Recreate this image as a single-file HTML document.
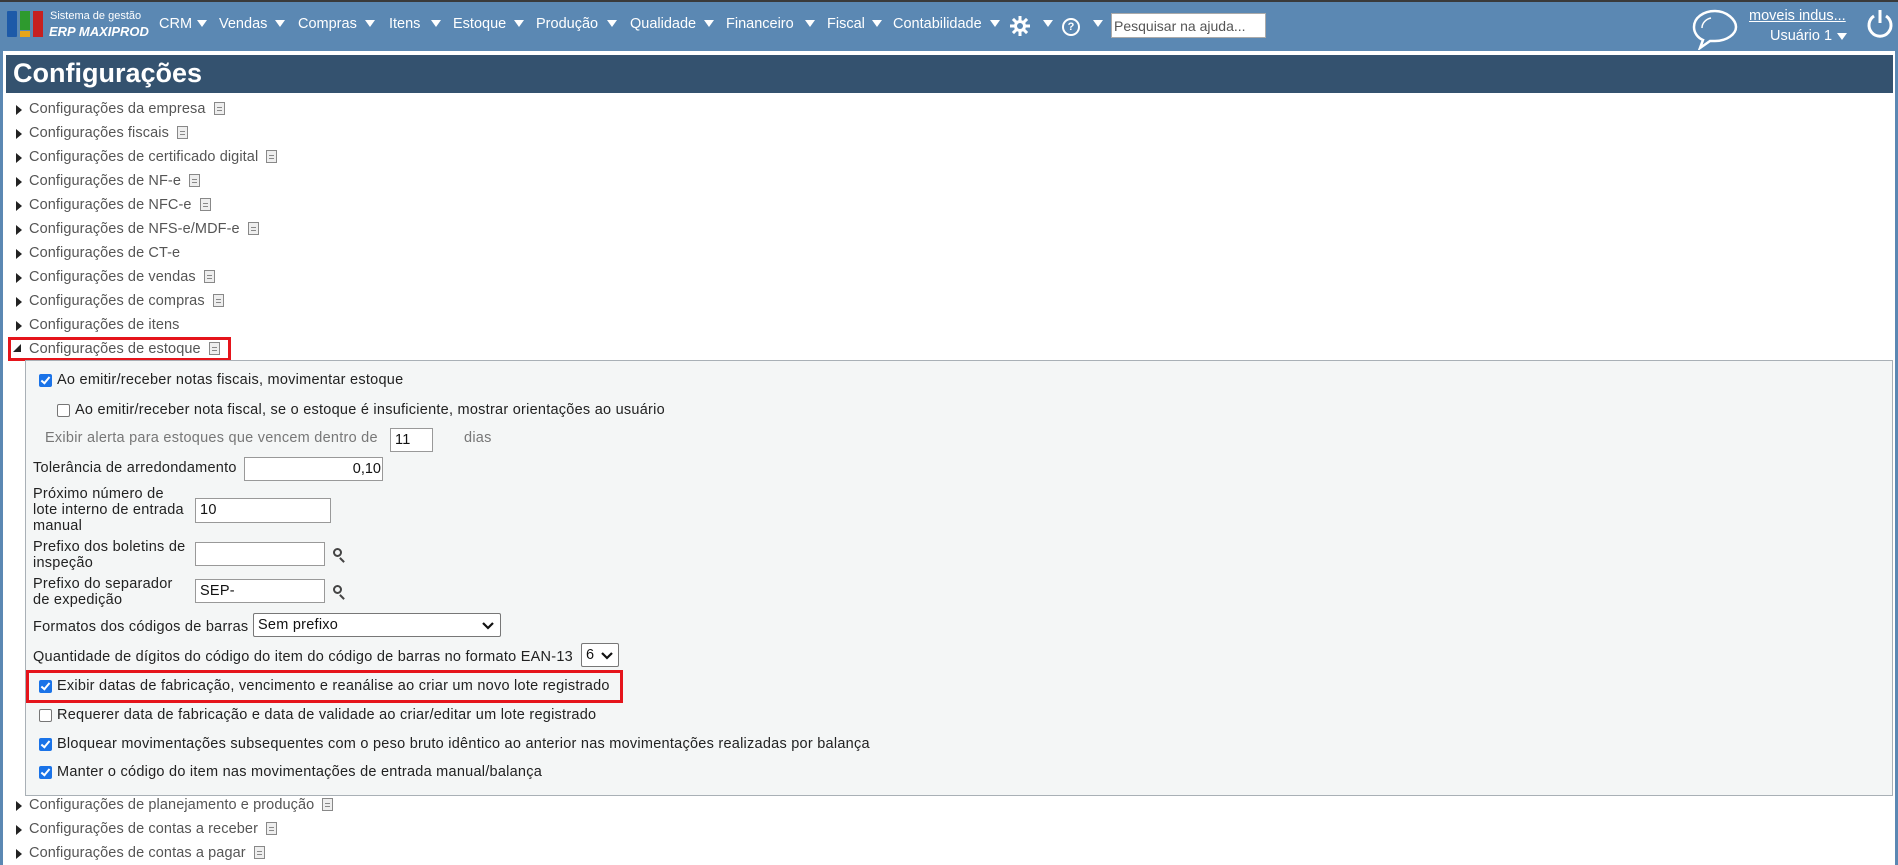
<!DOCTYPE html>
<html><head><meta charset="utf-8"><style>
*{margin:0;padding:0;box-sizing:border-box}
body{width:1898px;height:865px;overflow:hidden;background:#5b88b3;font-family:"Liberation Sans",sans-serif;position:relative}
.a{position:absolute;white-space:nowrap}
.m{color:#fff;font-size:14.5px;top:16px}
.tri{position:absolute;width:0;height:0;border-left:5px solid transparent;border-right:5px solid transparent;border-top:7px solid #fff}
.row{position:absolute;left:0;font-size:14.5px;color:#555;white-space:nowrap;letter-spacing:0.1px}
.row .ar{position:absolute;left:16px;top:4px;width:0;height:0;border-top:5px solid transparent;border-bottom:5px solid transparent;border-left:6px solid #222}
.row .t{position:absolute;left:29px;top:0}
.doc{display:inline-block;width:11px;height:13px;border:1px solid #888;background:#eee;vertical-align:-2px;margin-left:8px;position:relative}
.doc:before{content:"";position:absolute;left:2px;right:2px;top:4px;height:1px;background:#888;box-shadow:0 3px 0 #888}
.p{font-size:14.5px;color:#222;letter-spacing:0.25px}
.cb{position:absolute;width:13px;height:13px;border-radius:2px}
.cb.on{background:#1a73e8}
.cb.on:after{content:"";position:absolute;left:4px;top:1px;width:3px;height:7px;border:solid #fff;border-width:0 2px 2px 0;transform:rotate(40deg)}
.cb.off{border:1px solid #767676;background:#fff}
.in{position:absolute;background:#fff;border:1px solid #999;font-size:14.5px;color:#111;padding:3px 4px;letter-spacing:0.25px}
.sel{border-color:#777;border-radius:2px}
.sel svg{position:absolute;right:6px;top:8px}
.mag{position:absolute;width:9px;height:9px;border:2px solid #444;border-radius:50%}
.mag:after{content:"";position:absolute;left:6px;top:7px;width:2px;height:6px;background:#444;transform:rotate(-45deg)}
</style></head><body>
<div class="a" style="left:0;top:0;width:1898px;height:2px;background:#3a3a3a"></div>
<div class="a" style="left:7px;top:11px;width:10px;height:26px;background:#1d5aa8;border-radius:1px"></div>
<div class="a" style="left:20px;top:11px;width:10px;height:19px;background:#2e9a2e"></div>
<div class="a" style="left:20px;top:31px;width:10px;height:6px;background:#e8a51a"></div>
<div class="a" style="left:33px;top:11px;width:10px;height:26px;background:#c62020"></div>
<div class="a" style="left:50px;top:10px;color:#fff;font-size:11px">Sistema de gestão</div>
<div class="a" style="left:49px;top:24px;color:#fff;font-size:13px;font-weight:bold;font-style:italic">ERP MAXIPROD</div>
<div class="a m" style="left:159px">CRM</div><div class="tri" style="left:197px;top:20px"></div>
<div class="a m" style="left:219px">Vendas</div><div class="tri" style="left:275px;top:20px"></div>
<div class="a m" style="left:298px">Compras</div><div class="tri" style="left:365px;top:20px"></div>
<div class="a m" style="left:389px">Itens</div><div class="tri" style="left:431px;top:20px"></div>
<div class="a m" style="left:453px">Estoque</div><div class="tri" style="left:514px;top:20px"></div>
<div class="a m" style="left:536px">Produção</div><div class="tri" style="left:607px;top:20px"></div>
<div class="a m" style="left:630px">Qualidade</div><div class="tri" style="left:704px;top:20px"></div>
<div class="a m" style="left:726px">Financeiro</div><div class="tri" style="left:805px;top:20px"></div>
<div class="a m" style="left:827px">Fiscal</div><div class="tri" style="left:872px;top:20px"></div>
<div class="a m" style="left:893px">Contabilidade</div><div class="tri" style="left:990px;top:20px"></div>
<svg class="a" style="left:1010px;top:16px" width="20" height="20" viewBox="0 0 20 20"><g fill="#fff"><circle cx="10" cy="10" r="6"/><rect x="8.5" y="0" width="3" height="20"/><rect x="0" y="8.5" width="20" height="3"/><rect x="8.5" y="0" width="3" height="20" transform="rotate(45 10 10)"/><rect x="8.5" y="0" width="3" height="20" transform="rotate(-45 10 10)"/></g><circle cx="10" cy="10" r="3" fill="#5b88b3"/></svg>
<div class="tri" style="left:1043px;top:20px"></div>
<div class="a" style="left:1062px;top:18px;width:18px;height:18px;border:2px solid #fff;border-radius:50%;color:#fff;font-size:11px;font-weight:bold;text-align:center;line-height:14px">?</div>
<div class="tri" style="left:1093px;top:20px"></div>
<div class="a" style="left:1111px;top:13px;width:155px;height:25px;background:#fff;border:1px solid #aaa;font-size:14px;color:#555;padding:4px 2px">Pesquisar na ajuda...</div>
<svg class="a" style="left:1691px;top:8px" width="48" height="42" viewBox="0 0 48 42"><path d="M24 3C12 3 3 10 3 19c0 6 4 11 9 13l-3 8 10-7c2 0 3 0 5 0 12 0 21-7 21-14S36 3 24 3z" fill="none" stroke="#fff" stroke-width="2.5"/><path d="M11 20c0-5 4-9 9-10" fill="none" stroke="#fff" stroke-width="1.5"/></svg>
<div class="a" style="left:1749px;top:8px;color:#fff;font-size:14.5px;text-decoration:underline">moveis indus...</div>
<div class="a" style="left:1770px;top:28px;color:#fff;font-size:14.5px">Usuário 1</div><div class="tri" style="left:1837px;top:33px"></div>
<svg class="a" style="left:1865px;top:8px" width="30" height="32" viewBox="0 0 30 32"><path d="M9 8A11 11 0 1 0 21 8" fill="none" stroke="#fff" stroke-width="3"/><rect x="13.5" y="2" width="3" height="13" fill="#fff"/></svg>
<div class="a" style="left:3px;top:51px;width:1892px;height:814px;background:#fff"></div>
<div class="a" style="left:6px;top:55px;width:1887px;height:38px;background:#34526f;color:#fff;font-size:27px;font-weight:bold;padding:3px 0 0 7px">Configurações</div>
<div class="row" style="top:101px"><span class="ar"></span><span class="t">Configurações da empresa<span class="doc"></span></span></div>
<div class="row" style="top:125px"><span class="ar"></span><span class="t">Configurações fiscais<span class="doc"></span></span></div>
<div class="row" style="top:149px"><span class="ar"></span><span class="t">Configurações de certificado digital<span class="doc"></span></span></div>
<div class="row" style="top:173px"><span class="ar"></span><span class="t">Configurações de NF-e<span class="doc"></span></span></div>
<div class="row" style="top:197px"><span class="ar"></span><span class="t">Configurações de NFC-e<span class="doc"></span></span></div>
<div class="row" style="top:221px"><span class="ar"></span><span class="t">Configurações de NFS-e/MDF-e<span class="doc"></span></span></div>
<div class="row" style="top:245px"><span class="ar"></span><span class="t">Configurações de CT-e</span></div>
<div class="row" style="top:269px"><span class="ar"></span><span class="t">Configurações de vendas<span class="doc"></span></span></div>
<div class="row" style="top:293px"><span class="ar"></span><span class="t">Configurações de compras<span class="doc"></span></span></div>
<div class="row" style="top:317px"><span class="ar"></span><span class="t">Configurações de itens</span></div>
<div class="row" style="top:341px"><span class="a" style="left:13px;top:3px;width:0;height:0;border-left:8px solid transparent;border-bottom:8px solid #222"></span><span class="t">Configurações de estoque<span class="doc"></span></span></div>
<div class="a" style="left:8px;top:337px;width:223px;height:24px;border:3px solid #e5141b"></div>
<div class="a" style="left:25px;top:360px;width:1868px;height:436px;background:#f4f6f6;border:1px solid #a9b0b6"></div>
<div class="cb on" style="left:39px;top:374px"></div><div class="a p" style="left:57px;top:372px">Ao emitir/receber notas fiscais, movimentar estoque</div>
<div class="cb off" style="left:57px;top:404px"></div><div class="a p" style="left:75px;top:402px">Ao emitir/receber nota fiscal, se o estoque é insuficiente, mostrar orientações ao usuário</div>
<div class="a p" style="left:45px;top:430px;color:#777">Exibir alerta para estoques que vencem dentro de</div>
<div class="in" style="left:390px;top:428px;width:43px;height:24px">11</div>
<div class="a p" style="left:464px;top:430px;color:#777">dias</div>
<div class="a p" style="left:33px;top:460px">Tolerância de arredondamento</div>
<div class="in" style="left:244px;top:457px;width:139px;height:24px;text-align:right;padding-right:1px;letter-spacing:0">0,10</div>
<div class="a p" style="left:33px;top:486px;line-height:16px">Próximo número de<br>lote interno de entrada<br>manual</div>
<div class="in" style="left:195px;top:498px;width:136px;height:25px">10</div>
<div class="a p" style="left:33px;top:539px;line-height:16px">Prefixo dos boletins de<br>inspeção</div>
<div class="in" style="left:195px;top:542px;width:130px;height:24px"></div><div class="mag" style="left:333px;top:548px"></div>
<div class="a p" style="left:33px;top:576px;line-height:16px">Prefixo do separador<br>de expedição</div>
<div class="in" style="left:195px;top:579px;width:130px;height:24px">SEP-</div><div class="mag" style="left:333px;top:585px"></div>
<div class="a p" style="left:33px;top:619px">Formatos dos códigos de barras</div>
<div class="in sel" style="left:253px;top:613px;width:248px;height:24px">Sem prefixo<svg width="12" height="8" viewBox="0 0 12 8"><path d="M1 1l5 5 5-5" fill="none" stroke="#111" stroke-width="2.2"/></svg></div>
<div class="a p" style="left:33px;top:649px">Quantidade de dígitos do código do item do código de barras no formato EAN-13</div>
<div class="in sel" style="left:581px;top:643px;width:38px;height:24px;padding:3px 4px">6<svg width="12" height="8" viewBox="0 0 12 8" style="right:5px"><path d="M1 1l5 5 5-5" fill="none" stroke="#111" stroke-width="2.2"/></svg></div>
<div class="cb on" style="left:39px;top:680px"></div><div class="a p" style="left:57px;top:678px">Exibir datas de fabricação, vencimento e reanálise ao criar um novo lote registrado</div>
<div class="a" style="left:26px;top:670px;width:597px;height:33px;border:3px solid #e5141b"></div>
<div class="cb off" style="left:39px;top:709px"></div><div class="a p" style="left:57px;top:707px">Requerer data de fabricação e data de validade ao criar/editar um lote registrado</div>
<div class="cb on" style="left:39px;top:738px"></div><div class="a p" style="left:57px;top:736px">Bloquear movimentações subsequentes com o peso bruto idêntico ao anterior nas movimentações realizadas por balança</div>
<div class="cb on" style="left:39px;top:766px"></div><div class="a p" style="left:57px;top:764px">Manter o código do item nas movimentações de entrada manual/balança</div>
<div class="row" style="top:797px"><span class="ar"></span><span class="t">Configurações de planejamento e produção<span class="doc"></span></span></div>
<div class="row" style="top:821px"><span class="ar"></span><span class="t">Configurações de contas a receber<span class="doc"></span></span></div>
<div class="row" style="top:845px"><span class="ar"></span><span class="t">Configurações de contas a pagar<span class="doc"></span></span></div>
</body></html>
